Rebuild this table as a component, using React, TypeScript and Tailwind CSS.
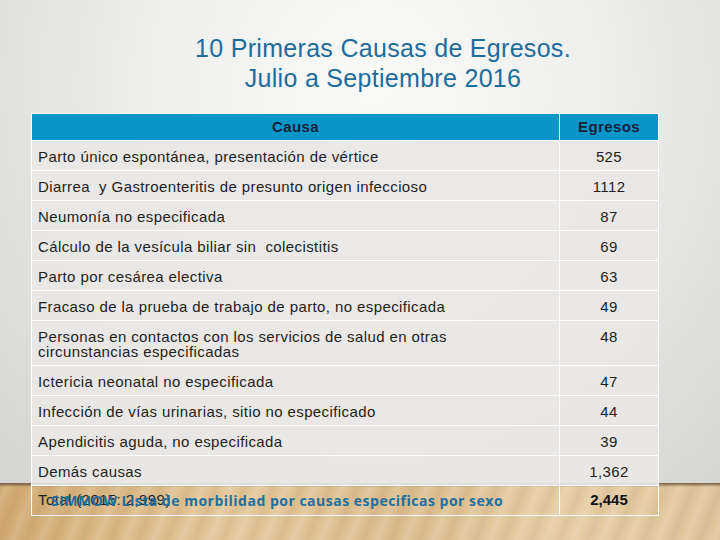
import React from "react";

const rows: [string, string][] = [
  ["Parto único espontánea, presentación de vértice", "525"],
  ["Diarrea  y Gastroenteritis de presunto origen infeccioso", "1112"],
  ["Neumonía no especificada", "87"],
  ["Cálculo de la vesícula biliar sin  colecistitis", "69"],
  ["Parto por cesárea electiva", "63"],
  ["Fracaso de la prueba de trabajo de parto, no especificada", "49"],
  [
    "Personas en contactos con los servicios de salud en otras\ncircunstancias especificadas",
    "48",
  ],
  ["Ictericia neonatal no especificada", "47"],
  ["Infección de vías urinarias, sitio no especificado", "44"],
  ["Apendicitis aguda, no especificada", "39"],
  ["Demás causas", "1,362"],
];

export default function App() {
  return (
    <div
      className="w-[720px] h-[540px] overflow-hidden flex flex-col font-['Liberation_Sans',Arial,sans-serif] [background:linear-gradient(to_bottom,#5a3d20cc_0,#5a3d2000_4px)_0_483px/100%_57px_no-repeat,radial-gradient(ellipse_at_52%_18%,#fafaf9_0%,#efefed_40%,#dcdcda_80%,#d4d4d2_100%)_0_0/100%_484px_no-repeat,repeating-linear-gradient(112deg,#ffffff00_0px,#ffffff22_6px,#ffffff00_13px,#8a5a2a14_19px,#ffffff00_26px),linear-gradient(100deg,#c79b63_0%,#d7b47f_20%,#e4c79b_40%,#dcbd8e_60%,#e6cda5_80%,#dfc49b_100%)]"
    >
      <div className="pt-[33px] pl-[46px] text-center text-[25px] tracking-[0.3px] leading-[30px] text-[#1d6c9c]">
        <div>10 Primeras Causas de Egresos.</div>
        <div>Julio a Septiembre 2016</div>
      </div>

      <div className="ml-[31px] mt-[20px] w-[628px] text-[15px] tracking-[0.4px] text-[#1e1e1e]">
        <div className="flex h-[28px] bg-[#0895c7] border border-white font-bold text-[#13233a]">
          <div className="w-[527px] flex items-center justify-center">Causa</div>
          <div className="flex-1 border-l border-white flex items-center justify-center">
            Egresos
          </div>
        </div>
        {rows.map(([c, n], i) => (
          <div
            key={i}
            className="flex bg-[#e9e8e5e6] border-x border-b border-white leading-[15px]"
          >
            <div className="w-[527px] pl-[6px] pt-[8px] pb-[6px] whitespace-pre">
              {c}
            </div>
            <div className="flex-1 border-l border-white pt-[8px] text-center">{n}</div>
          </div>
        ))}
        <div className="flex h-[30px] border-x border-b border-white">
          <div className="relative w-[527px] pl-[6px] flex items-center">
            <span>Total (2015: 2,999)</span>
            <span className="absolute left-[19px] top-[7px] text-[14px] font-bold tracking-[0.5px] text-[#1c6fa1] font-['Open_Sans',sans-serif] leading-[16px]">
              SIMMOW Lista de morbilidad por causas especificas por sexo
            </span>
          </div>
          <div className="flex-1 border-l border-white flex items-center justify-center font-bold text-[15px] tracking-normal text-[#111]">
            2,445
          </div>
        </div>
      </div>
    </div>
  );
}
